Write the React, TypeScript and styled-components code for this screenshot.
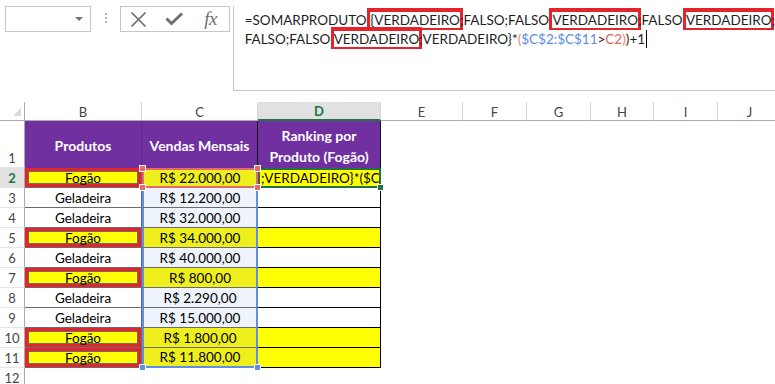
import React from 'react';
import styled, { createGlobalStyle, css } from 'styled-components';

const GlobalStyle = createGlobalStyle`
    html, body {
        margin: 0;
        padding: 0;
        background: #ffffff;
    }
    body {
        font-family: Lato, 'Liberation Sans', sans-serif;
        color: #000;
    }
`;

const Page = styled.div`
    width: 775px;
    height: 384px;
    overflow: hidden;
    background: #fff;
`;

/* ---------- formula bar ---------- */

const TopBar = styled.div`
    display: flex;
    align-items: flex-start;
    height: 91px;
`;

const NameBox = styled.div`
    box-sizing: border-box;
    margin: 6px 0 0 5px;
    width: 102px;
    height: 26px;
    border: 1px solid #c6c6c6;
    display: flex;
    align-items: center;
    justify-content: flex-end;
    padding-right: 7px;
`;

const DropArrow = styled.span`
    width: 0;
    height: 0;
    border-left: 4px solid transparent;
    border-right: 4px solid transparent;
    border-top: 4px solid #777;
`;

const Grip = styled.div`
    margin: 13px 0 0 14px;
    display: flex;
    flex-direction: column;
    gap: 2px;

    span {
        width: 2px;
        height: 2px;
        background: #b4b4b4;
    }
`;

const FxBox = styled.div`
    box-sizing: border-box;
    margin: 6px 0 0 13px;
    width: 110px;
    height: 26px;
    border: 1px solid #c6c6c6;
    display: grid;
    grid-template-columns: repeat(3, 36px);
    align-items: center;
    justify-items: center;
`;

const Fx = styled.span`
    font-family: 'Liberation Serif', serif;
    font-style: italic;
    font-size: 19px;
    color: #6e6e6e;
    letter-spacing: -0.5px;
    line-height: 1;
    margin-top: -1px;
`;

const FormulaBox = styled.div`
    box-sizing: border-box;
    flex: 1;
    margin: 6px 0 0 3px;
    height: 85px;
    border-left: 1px solid #c6c6c6;
    border-bottom: 1px solid #c6c6c6;
    padding: 5px 0 0 11px;
    font-size: 13.5px;
    line-height: 19px;
    color: #1e1e1e;
    white-space: nowrap;
`;

const Mark = styled.span`
    box-shadow: 0 -1px 0 3px #e3242b;
`;

const Ref = styled.span<{ $tone: 'blue' | 'red' | 'paren' }>`
    color: ${(p) => (p.$tone === 'blue' ? '#5b8de6' : p.$tone === 'red' ? '#e5625f' : '#e98a6a')};
`;

const Caret = styled.span`
    display: inline-block;
    width: 1px;
    height: 18px;
    background: #000;
    vertical-align: -4px;
    margin-left: 1px;
`;

/* ---------- sheet ---------- */

const Sheet = styled.div`
    margin-top: 11px;
    display: grid;
    grid-template-columns: 25px 117px 116px 123px 82px 64px 64px 63px 64px 64px;
    grid-template-rows: 19px 47px repeat(11, 20px);
    font-size: 13.5px;
`;

const cellBase = css`
    box-sizing: border-box;
    position: relative;
    display: flex;
    align-items: center;
    justify-content: center;
    white-space: nowrap;
`;

const Corner = styled.div`
    ${cellBase};
    border-right: 1px solid #ababab;
    border-bottom: 1px solid #ababab;

    &::after {
        content: '';
        position: absolute;
        right: 3px;
        bottom: 4px;
        border-left: 8px solid transparent;
        border-bottom: 8px solid #dadada;
    }
`;

const ColHead = styled.div<{ $active?: boolean }>`
    ${cellBase};
    font-size: 13px;
    color: #444;
    border-right: 1px solid #d8d8d8;
    border-bottom: 1px solid #ababab;
    padding-top: 1px;
    ${(p) =>
        p.$active &&
        css`
            background: #e1e1e1;
            color: #217346;
            font-weight: 700;
            border-bottom: 2px solid #217346;
        `}
`;

const RowHead = styled.div<{ $active?: boolean; $tall?: boolean }>`
    ${cellBase};
    font-size: 13px;
    color: #444;
    border-right: 1px solid #ababab;
    border-bottom: 1px solid #e4e4e4;
    align-items: ${(p) => (p.$tall ? 'flex-end' : 'center')};
    padding-bottom: ${(p) => (p.$tall ? '1px' : '0')};
    ${(p) =>
        p.$active &&
        css`
            background: #e1e1e1;
            color: #217346;
            font-weight: 700;
        `}
`;

const TitleCell = styled.div<{ $edge: 'soft' | 'hard' }>`
    ${cellBase};
    background: #7030a0;
    color: #fff;
    font-size: 14px;
    font-weight: 700;
    text-align: center;
    line-height: 21px;
    padding-top: 2px;
    border-right: 1px solid ${(p) => (p.$edge === 'hard' ? '#111' : '#60288c')};
`;

const ProductCell = styled.div<{ $fogao: boolean }>`
    ${cellBase};
    border-right: 1px solid #6b6b6b;
    border-bottom: 1px solid #6b6b6b;
    ${(p) =>
        p.$fogao &&
        css`
            background: #ffff00;
            box-shadow: inset 0 0 0 3px #e3242b, inset 0 0 0 4px #6b6b6b;
        `}
`;

const SalesCell = styled.div<{ $fogao: boolean; $first: boolean; $last: boolean }>`
    ${cellBase};
    background: ${(p) => (p.$fogao ? '#efef1d' : '#eef3fc')};
    border-left: 2px solid #5e8fe4;
    border-right: 2px solid #5e8fe4;
    border-bottom: ${(p) => (p.$last ? '2px solid #5e8fe4' : '1px solid #6b6b6b')};
    ${(p) =>
        p.$first &&
        css`
            border: 2px solid #e66a6a;
        `}
`;

const RankCell = styled.div<{ $fogao: boolean; $active: boolean }>`
    ${cellBase};
    justify-content: flex-start;
    background: ${(p) => (p.$fogao ? '#ffff00' : '#fff')};
    border-right: 1px solid #000;
    border-bottom: 1px solid #000;
    ${(p) =>
        p.$active &&
        css`
            border: 2px solid #217346;
            padding-left: 1px;
        `}
`;

const Clip = styled.span`
    display: block;
    overflow: hidden;
    width: 100%;
`;

const Blank = styled.div`
    box-sizing: border-box;
`;

const Handle = styled.span<{ $color: string; $x: 'left' | 'right'; $y: 'top' | 'bottom' }>`
    position: absolute;
    z-index: 2;
    width: 5px;
    height: 5px;
    background: ${(p) => p.$color};
    border: 1px solid #fff;
    ${(p) => (p.$x === 'left' ? 'left: -5px;' : 'right: -5px;')}
    ${(p) => (p.$y === 'top' ? 'top: -5px;' : 'bottom: -5px;')}
`;

const XIcon = () => (
    <svg width="17" height="17" viewBox="0 0 17 17">
        <path d="M1.5 1.5 L15.5 15.5 M15.5 1.5 L1.5 15.5" stroke="#6e6e6e" strokeWidth="1.7" fill="none" />
    </svg>
);

const CheckIcon = () => (
    <svg width="19" height="14" viewBox="0 0 19 14">
        <path d="M1.5 6.5 L6.5 11.5 L17 1.5" stroke="#6e6e6e" strokeWidth="3" fill="none" />
    </svg>
);

const rows = [
    { product: 'Fogão', value: 'R$ 22.000,00' },
    { product: 'Geladeira', value: 'R$ 12.200,00' },
    { product: 'Geladeira', value: 'R$ 32.000,00' },
    { product: 'Fogão', value: 'R$ 34.000,00' },
    { product: 'Geladeira', value: 'R$ 40.000,00' },
    { product: 'Fogão', value: 'R$ 800,00' },
    { product: 'Geladeira', value: 'R$ 2.290,00' },
    { product: 'Geladeira', value: 'R$ 15.000,00' },
    { product: 'Fogão', value: 'R$ 1.800,00' },
    { product: 'Fogão', value: 'R$ 11.800,00' },
];

const columns = ['B', 'C', 'D', 'E', 'F', 'G', 'H', 'I', 'J'];
const rest = ['E', 'F', 'G', 'H', 'I', 'J'];

const App = () => {
    return (
        <Page>
            <GlobalStyle />
            <TopBar>
                <NameBox>
                    <DropArrow />
                </NameBox>
                <Grip>
                    <span />
                    <span />
                    <span />
                </Grip>
                <FxBox>
                    <XIcon />
                    <CheckIcon />
                    <Fx>fx</Fx>
                </FxBox>
                <FormulaBox>
                    =SOMARPRODUTO(<Mark>{'{VERDADEIRO'}</Mark>;FALSO;FALSO;<Mark>VERDADEIRO</Mark>;FALSO;
                    <Mark>VERDADEIRO</Mark>;
                    <br />
                    FALSO;FALSO;<Mark>VERDADEIRO</Mark>;VERDADEIRO{'}'}*<Ref $tone="paren">(</Ref>
                    <Ref $tone="blue">$C$2:$C$11</Ref>&gt;<Ref $tone="red">C2</Ref>
                    <Ref $tone="paren">)</Ref>)+1
                    <Caret />
                </FormulaBox>
            </TopBar>

            <Sheet>
                <Corner />
                {columns.map((c) => (
                    <ColHead key={c} $active={c === 'D'}>
                        {c}
                    </ColHead>
                ))}

                <RowHead $tall>1</RowHead>
                <TitleCell $edge="soft">Produtos</TitleCell>
                <TitleCell $edge="hard">Vendas Mensais</TitleCell>
                <TitleCell $edge="hard">
                    Ranking por
                    <br />
                    Produto (Fogão)
                </TitleCell>
                {rest.map((c) => (
                    <Blank key={`1${c}`} />
                ))}

                {rows.map((r, i) => {
                    const n = i + 2;
                    const fogao = r.product === 'Fogão';
                    const first = i === 0;
                    const last = i === rows.length - 1;
                    return (
                        <React.Fragment key={n}>
                            <RowHead $active={first}>{n}</RowHead>
                            <ProductCell $fogao={fogao}>{r.product}</ProductCell>
                            <SalesCell $fogao={fogao} $first={first} $last={last}>
                                {r.value}
                                {first && (
                                    <>
                                        <Handle $color="#e66a6a" $x="left" $y="top" />
                                        <Handle $color="#e66a6a" $x="right" $y="top" />
                                        <Handle $color="#e66a6a" $x="left" $y="bottom" />
                                        <Handle $color="#e66a6a" $x="right" $y="bottom" />
                                    </>
                                )}
                                {last && (
                                    <>
                                        <Handle $color="#5e8fe4" $x="left" $y="bottom" />
                                        <Handle $color="#5e8fe4" $x="right" $y="bottom" />
                                    </>
                                )}
                            </SalesCell>
                            <RankCell $fogao={fogao} $active={first}>
                                {first && (
                                    <>
                                        <Clip>;VERDADEIRO{'}'}*($C$</Clip>
                                        <Handle $color="#217346" $x="right" $y="bottom" />
                                    </>
                                )}
                            </RankCell>
                            {rest.map((c) => (
                                <Blank key={`${n}${c}`} />
                            ))}
                        </React.Fragment>
                    );
                })}

                <RowHead>12</RowHead>
            </Sheet>
        </Page>
    );
};

export default App;
